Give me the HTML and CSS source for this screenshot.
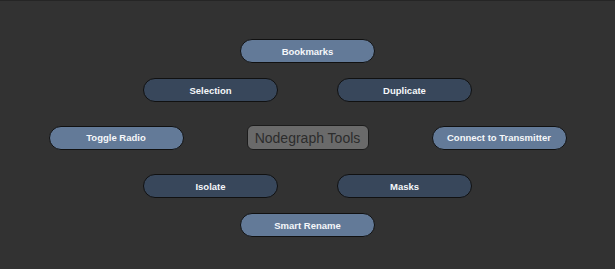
FILE: index.html
```html
<!DOCTYPE html>
<html lang="en">
<head>
    <meta charset="UTF-8">
    <meta name="viewport" content="width=device-width, initial-scale=1.0">
    <title>Nodegraph Tools</title>
    <link rel="stylesheet" href="styles.css">
</head>
<body>
    <div id="topline"></div>
    <div id="menu">
        <div class="row first">
            <div class="btn light">Bookmarks</div>
        </div>
        <div class="row pair">
            <div class="btn">Selection</div>
            <div class="btn">Duplicate</div>
        </div>
        <div class="row middle">
            <div class="btn light">Toggle Radio</div>
            <div id="title">Nodegraph Tools</div>
            <div class="btn light">Connect to Transmitter</div>
        </div>
        <div class="row pair">
            <div class="btn">Isolate</div>
            <div class="btn">Masks</div>
        </div>
        <div class="row last">
            <div class="btn light">Smart Rename</div>
        </div>
    </div>
</body>
</html>
```

FILE: styles.css
```css
body {
    margin: 0;
    background-color: #323232;
    font-family: "Liberation Sans", Arial, sans-serif;
}

#topline {
    height: 1px;
    background-color: #252525;
}

#menu {
    display: flex;
    flex-direction: column;
    align-items: center;
    padding-top: 38px;
}

.row {
    display: flex;
    justify-content: center;
    align-items: center;
}

.pair { gap: 59px; margin-top: 15px; }
.middle { gap: 63px; margin-top: 23px; margin-bottom: 24px; }
.middle + .pair { margin-top: 0; }
.last { margin-top: 15px; }

.btn {
    box-sizing: border-box;
    width: 135px;
    height: 24px;
    border: 1px solid #111111;
    border-radius: 12px;
    background-color: #38475b;
    color: #f5f7fa;
    font-size: 9.5px;
    font-weight: bold;
    display: flex;
    align-items: center;
    justify-content: center;
}

.btn.light {
    background-color: #637a98;
}

#title {
    box-sizing: border-box;
    width: 122px;
    height: 25px;
    border: 1px solid #1c1c1c;
    border-radius: 6px;
    background-color: #6a6a6a;
    color: #2c2c2c;
    font-size: 14px;
    display: flex;
    align-items: center;
    justify-content: center;
}
```
